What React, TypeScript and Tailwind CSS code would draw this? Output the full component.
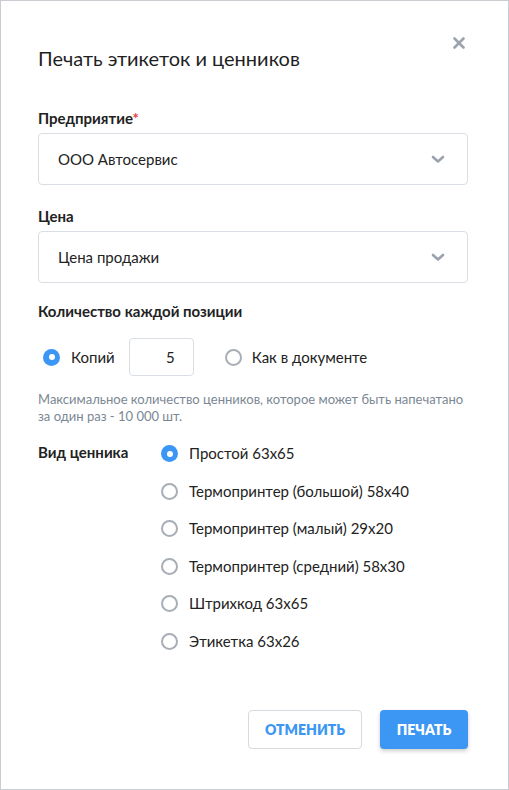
import React from "react";

function Chevron() {
  return (
    <svg width="14" height="9" viewBox="0 0 14 9" className="text-[#9aa3ad]">
      <path d="M2 2 L7 6.5 L12 2" fill="none" stroke="currentColor" strokeWidth="2.6" strokeLinecap="round" strokeLinejoin="round" />
    </svg>
  );
}

function Radio({ checked }: { checked?: boolean }) {
  return checked ? (
    <span className="flex h-[17px] w-[17px] shrink-0 items-center justify-center rounded-full bg-[#3b97f3]">
      <span className="h-[6px] w-[6px] rounded-full bg-white" />
    </span>
  ) : (
    <span className="block h-[17px] w-[17px] shrink-0 rounded-full border-2 border-[#a8aeb5] bg-white" />
  );
}

function Select({ value }: { value: string }) {
  return (
    <div className="flex h-[52px] items-center justify-between rounded-[4px] border border-[#d9dee4] pl-[19px] pr-[22px] text-[15px] text-[#222]">
      <span>{value}</span>
      <Chevron />
    </div>
  );
}

export default function App() {
  const kinds = [
    "Простой 63x65",
    "Термопринтер (большой) 58x40",
    "Термопринтер (малый) 29x20",
    "Термопринтер (средний) 58x30",
    "Штрихкод 63x65",
    "Этикетка 63x26",
  ];
  return (
    <div
      className="relative h-[790px] w-[509px] border border-[#c9cdd2] bg-white text-[#222]"
      style={{ fontFamily: "Lato, 'Noto Sans', sans-serif" }}
    >
      <button className="absolute right-[43px] top-[36px] text-[#9ba3ad]">
        <svg width="12" height="12" viewBox="0 0 12 12">
          <path d="M1.5 1.5 L10.5 10.5 M10.5 1.5 L1.5 10.5" stroke="currentColor" strokeWidth="2.6" strokeLinecap="round" />
        </svg>
      </button>
      <div className="pl-[37px] pr-[40px]">
        <h1 className="mt-[43px] text-[20px] leading-[28px] text-[#1f1f1f]">Печать этикеток и ценников</h1>

        <div className="mt-[36px] text-[15px] font-bold leading-[20px]">
          Предприятие<span className="text-[#ee3b3b]">*</span>
        </div>
        <div className="mt-[5px]">
          <Select value="ООО Автосервис" />
        </div>

        <div className="mt-[21px] text-[15px] font-bold leading-[20px]">Цена</div>
        <div className="mt-[5px]">
          <Select value="Цена продажи" />
        </div>

        <div className="mt-[18px] text-[15px] font-bold leading-[20px]">Количество каждой позиции</div>

        <div className="mt-[17px] flex h-[38px] items-center pl-[5px] text-[15px]">
          <Radio checked />
          <span className="ml-[11px]">Копий</span>
          <div className="ml-[14px] flex h-[38px] w-[65px] items-center justify-end rounded-[4px] border border-[#d9dee4] pr-[18px]">
            5
          </div>
          <span className="ml-[31px] flex">
            <Radio />
          </span>
          <span className="ml-[10px]">Как в документе</span>
        </div>

        <p className="mt-[15px] text-[13px] leading-[17px] text-[#7b8793]">
          Максимальное количество ценников, которое может быть напечатано за один раз - 10 000 шт.
        </p>

        <div className="mt-[17px] flex">
          <div className="w-[123px] text-[15px] font-bold leading-[20px]">Вид ценника</div>
          <div className="flex flex-col gap-[20.5px] pt-[3px]">
            {kinds.map((k, i) => (
              <div key={k} className="flex h-[17px] items-center text-[15px]">
                <Radio checked={i === 0} />
                <span className="ml-[11px]">{k}</span>
              </div>
            ))}
          </div>
        </div>

        <div className="mt-[60px] flex justify-end gap-[18px]">
          <button className="h-[39px] w-[114px] rounded-[4px] border border-[#d5dadf] text-[14px] font-extrabold text-[#3b97f3]">
            ОТМЕНИТЬ
          </button>
          <button className="h-[39px] w-[88px] rounded-[4px] bg-[#3b97f3] text-[14px] font-extrabold text-white shadow-[0_2px_4px_rgba(0,0,0,0.2)]">
            ПЕЧАТЬ
          </button>
        </div>
      </div>
    </div>
  );
}
